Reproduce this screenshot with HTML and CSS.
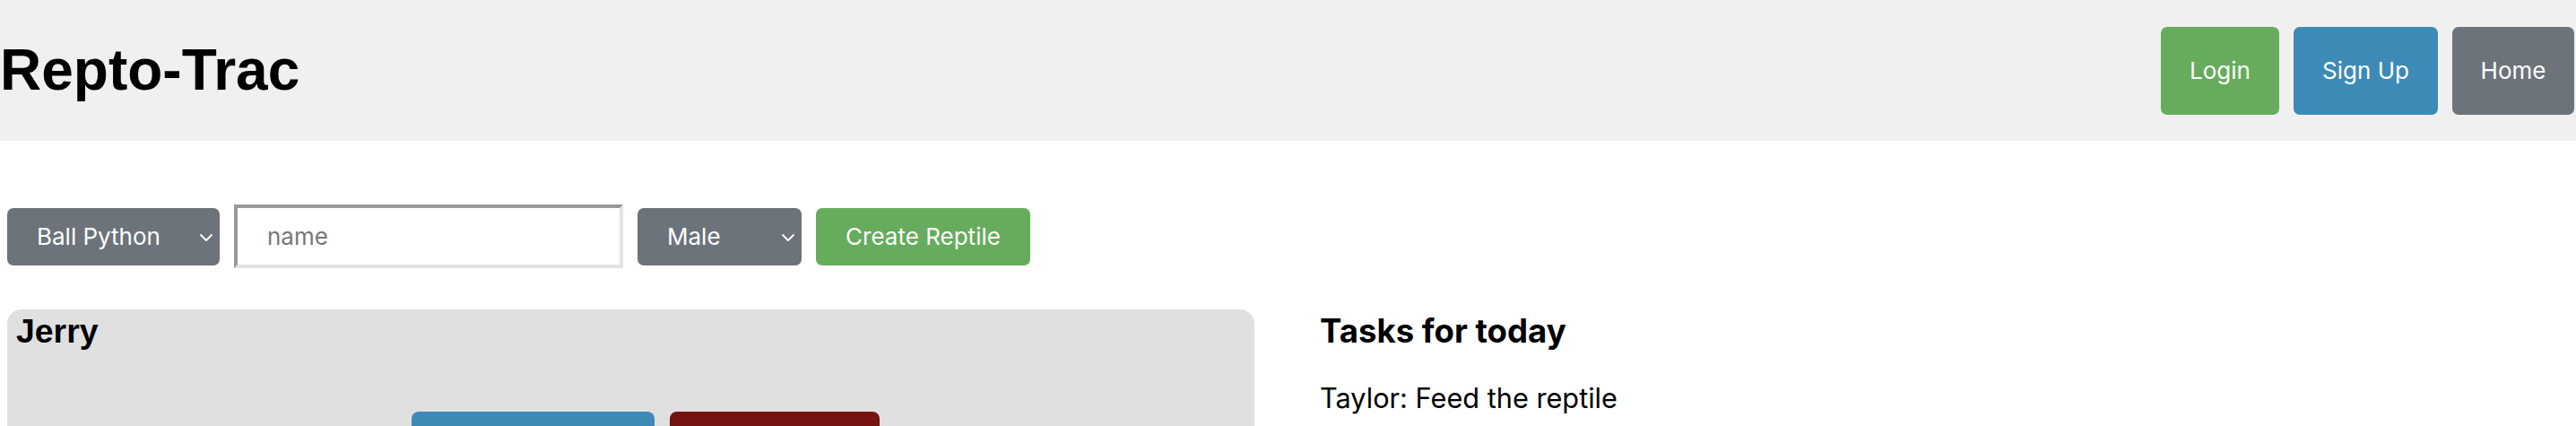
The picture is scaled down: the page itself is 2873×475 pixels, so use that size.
FILE: index.html
```html
<!DOCTYPE html>
<html lang="en">
<head>
<meta charset="utf-8">
<title>Repto-Trac</title>
<link rel="stylesheet" href="styles.css">
</head>
<body>
<header class="topbar">
  <h1 class="brand">Repto-Trac</h1>
  <nav class="nav">
    <button class="btn btn-green">Login</button>
    <button class="btn btn-blue">Sign Up</button>
    <button class="btn btn-gray">Home</button>
  </nav>
</header>

<form class="create-row">
  <span class="select-wrap species">
    <select class="select">
      <option>Ball Python</option>
    </select>
    <svg class="chev" viewBox="0 0 14 8" width="14" height="8"><path d="M1 1 L7 7 L13 1" fill="none" stroke="#fff" stroke-width="1.8" stroke-linecap="round" stroke-linejoin="round"/></svg>
  </span>
  <input class="name-input" type="text" placeholder="name">
  <span class="select-wrap sex">
    <select class="select">
      <option>Male</option>
    </select>
    <svg class="chev" viewBox="0 0 14 8" width="14" height="8"><path d="M1 1 L7 7 L13 1" fill="none" stroke="#fff" stroke-width="1.8" stroke-linecap="round" stroke-linejoin="round"/></svg>
  </span>
  <button type="button" class="ctl-btn btn-green">Create Reptile</button>
</form>

<main class="content">
  <section class="card">
    <h3 class="card-title">Jerry</h3>
    <div class="card-actions">
      <button class="card-btn btn-blue wide" aria-label="edit"></button>
      <button class="card-btn btn-red narrow" aria-label="delete"></button>
    </div>
  </section>
  <section class="tasks">
    <h3 class="tasks-title">Tasks for today</h3>
    <p class="task">Taylor: Feed the reptile</p>
  </section>
</main>
</body>
</html>
```

FILE: styles.css
```css
html, body {
  margin: 0;
  padding: 0;
  background: #fff;
}
body {
  font-family: Inter, "Noto Sans", sans-serif;
  color: #000;
}

.topbar {
  display: flex;
  justify-content: space-between;
  align-items: center;
  background: #f0f0f0;
  padding-right: 2px;
  height: 157px;
}
.brand {
  margin: 0;
  font-family: "Liberation Sans", Arial, sans-serif;
  font-weight: 700;
  font-size: 64px;
  line-height: 72px;
  padding-left: 0;
  position: relative;
  top: -1px;
}
.nav {
  display: flex;
  gap: 16px;
  align-items: center;
}
.btn {
  border: none;
  border-radius: 7px;
  color: #fff;
  font-family: Inter, "Noto Sans", sans-serif;
  font-size: 26px;
  line-height: 32px;
  padding: 33px 0;
  text-align: center;
}
.btn-green { background: #66ac5c; }
.btn-blue { background: #3d8ab6; }
.btn-gray { background: #6c737b; }
.btn-red { background: #74130f; }
.nav .btn-green { width: 132px; }
.nav .btn-blue { width: 161px; }
.nav .btn-gray { width: 136px; }

.create-row {
  display: flex;
  align-items: center;
  gap: 16px;
  padding: 71px 8px 0;
  margin: 0;
}
.select-wrap {
  position: relative;
  display: block;
}
.select {
  appearance: none;
  -webkit-appearance: none;
  border: none;
  border-radius: 7px;
  background: #6c737b;
  color: #fff;
  font-family: Inter, "Noto Sans", sans-serif;
  font-size: 26px;
  line-height: 32px;
  height: 64px;
  padding: 0 0 0 33px;
  display: block;
}
.species .select { width: 237px; }
.sex .select { width: 183px; }
.chev {
  position: absolute;
  right: 8px;
  top: 29px;
  pointer-events: none;
}
.name-input {
  box-sizing: border-box;
  width: 434px;
  height: 71px;
  border-width: 4px;
  border-style: solid;
  border-color: #999 #e3e3e3 #e3e3e3 #999;
  padding: 0 33px;
  font-family: Inter, "Noto Sans", sans-serif;
  font-size: 26px;
  background: #fff;
  outline: none;
}
.name-input::placeholder { color: #777; }
.ctl-btn {
  border: none;
  border-radius: 7px;
  color: #fff;
  font-family: Inter, "Noto Sans", sans-serif;
  font-size: 26px;
  line-height: 32px;
  height: 64px;
  width: 239px;
  padding: 0;
}

.content {
  display: grid;
  grid-template-columns: 1391px 1fr;
  column-gap: 73px;
  padding: 46px 8px 0;
}
.card {
  background: #e0e0e0;
  border-radius: 16px;
  padding: 3px 10px 40px;
  min-height: 200px;
}
.card-title {
  margin: 0;
  font-family: "Liberation Sans", Arial, sans-serif;
  font-weight: 700;
  font-size: 37.4px;
  line-height: 43px;
}
.card-actions {
  display: flex;
  justify-content: center;
  gap: 17px;
  margin-top: 68px;
  padding-left: 32px;
}
.card-btn {
  border: none;
  border-radius: 8px;
  height: 98px;
  padding: 0;
}
.card-btn.wide { width: 271px; }
.card-btn.narrow { width: 234px; }

.tasks {
  padding-top: 2px;
}
.tasks-title {
  margin: 0;
  font-family: Inter, "Noto Sans", sans-serif;
  font-weight: 700;
  font-size: 36.6px;
  line-height: 45px;
}
.task {
  margin: 33px 0 0;
  font-size: 30.7px;
  line-height: 38px;
}
```
